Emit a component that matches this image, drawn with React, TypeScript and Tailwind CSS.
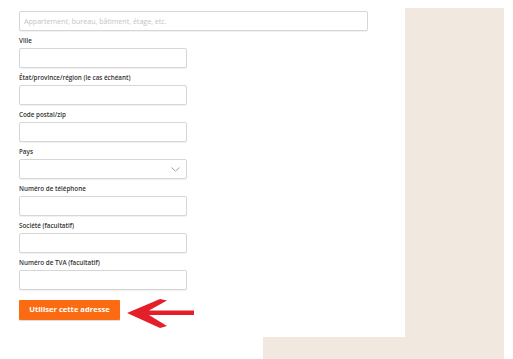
import React from "react";

const Label = ({ children }: { children: React.ReactNode }) => (
  <div className="mt-[5px] mb-[2px] h-[10px] leading-[10px] text-[6.3px] font-semibold text-[#333333]">{children}</div>
);

const Input = ({ wide = false }: { wide?: boolean }) => (
  <div
    className={`h-[20px] ${wide ? "w-[349px]" : "w-[168px]"} rounded-[2px] border border-[#d6d6d6] bg-white shadow-[0_1px_1px_rgba(0,0,0,0.06)]`}
  />
);

export default function App() {
  return (
    <div
      className="flex h-[359px] w-[513px] flex-col overflow-hidden bg-white"
      style={{ fontFamily: '"Open Sans", "Noto Sans", sans-serif' }}
    >
      <div className="flex h-[337px]">
        <div className="w-[405px] pl-[19px] pt-[11px]">
          <div className="flex h-[20px] w-[349px] items-center rounded-[2px] border border-[#d6d6d6] bg-white px-[4px] text-[7.1px] text-[#c4c4c4] shadow-[0_1px_1px_rgba(0,0,0,0.06)]">
            Appartement, bureau, bâtiment, étage, etc.
          </div>
          <Label>Ville</Label>
          <Input />
          <Label>État/province/région (le cas échéant)</Label>
          <Input />
          <Label>Code postal/zip</Label>
          <Input />
          <Label>Pays</Label>
          <div className="flex h-[20px] w-[168px] items-center justify-end rounded-[2px] border border-[#d6d6d6] bg-white pr-[6px] shadow-[0_1px_1px_rgba(0,0,0,0.06)]">
            <svg width="9" height="5" viewBox="0 0 9 5">
              <path d="M0.5 0.5 L4.5 4.2 L8.5 0.5" fill="none" stroke="#9a9a9a" strokeWidth="0.9" />
            </svg>
          </div>
          <Label>Numéro de téléphone</Label>
          <Input />
          <Label>Société (facultatif)</Label>
          <Input />
          <Label>Numéro de TVA (facultatif)</Label>
          <Input />
          <div className="mt-[10px] flex items-start gap-[7px]">
            <button className="flex h-[20px] w-[101px] items-center justify-center rounded-[1px] bg-[#fa6b12] text-[7.6px] font-bold text-white shadow-[0_1px_1px_rgba(0,0,0,0.15)]">
              Utiliser cette adresse
            </button>
            <svg width="68" height="29" viewBox="0 0 68 29" className="-mt-[1px]">
              <polygon
                points="0,14 33,0 40,1.5 22,11.5 67,11.5 67,16 22,16 40,27 33,29"
                fill="#e3202a"
              />
            </svg>
          </div>
        </div>
        <div className="mt-[8px] w-[99px] bg-[#f1e9e0]" />
      </div>
      <div className="ml-[263px] h-[22px] w-[241px] bg-[#f1e9e0]" />
    </div>
  );
}
